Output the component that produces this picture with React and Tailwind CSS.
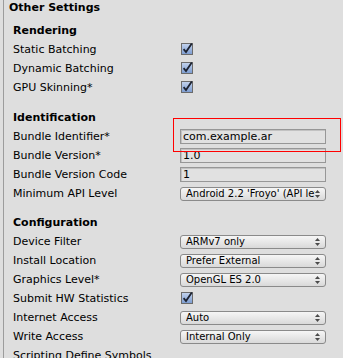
// Painel "Other Settings" do Player Settings (Android)

const headerClass = "h-[18px] leading-[18px] pl-[9px] text-[11px] font-bold text-black";

// Seta dupla dos menus suspensos
function UpDown() {
  return (
    <svg width="5" height="8" viewBox="0 0 5 8" className="shrink-0">
      <path d="M0 3 L2.5 0 L5 3 Z" fill="#4a4a4a" />
      <path d="M0 5 L2.5 8 L5 5 Z" fill="#4a4a4a" />
    </svg>
  );
}

function Checkbox() {
  return (
    <svg width="13" height="13" viewBox="0 0 13 13" className="overflow-visible ml-[1px]">
      <defs>
        <linearGradient id="cb" x1="0" y1="0" x2="0" y2="1">
          <stop offset="0" stopColor="#c4d4ee" />
          <stop offset="1" stopColor="#7b9bd0" />
        </linearGradient>
      </defs>
      <rect x="0.5" y="0.5" width="11" height="11" fill="url(#cb)" stroke="#6b6b6b" />
      <path d="M2.6 6.2 L5 9 L10.8 0.4" fill="none" stroke="#1c2230" strokeWidth="1.8" />
    </svg>
  );
}

function TextField({ value }) {
  return (
    <div className="h-[15px] border border-[#979797] bg-[#e1e1e1] pl-[2px] text-[11px] leading-[13px] text-black shadow-[inset_1px_1px_0_#c2c2c2] overflow-hidden whitespace-nowrap">
      {value}
    </div>
  );
}

function Dropdown({ value }) {
  return (
    <div className="flex h-[14px] items-center justify-between rounded-[3px] border border-[#8a8a8a] bg-linear-to-b from-[#f6f6f6] to-[#d9d9d9] pl-[5px] pr-[5px] text-[10px] leading-[12px] text-black">
      <span className="overflow-hidden whitespace-nowrap pr-[4px]">{value}</span>
      <UpDown />
    </div>
  );
}

function Row({ name, children }) {
  return (
    <div className="flex h-[19px] items-center">
      <div className="w-[176px] shrink-0 pl-[9px] text-[11px] leading-[19px] text-black whitespace-nowrap">{name}</div>
      <div className="w-[146px] shrink-0">{children}</div>
    </div>
  );
}

export default function App() {
  return (
    <div className="relative h-[358px] w-[343px] overflow-hidden bg-[#dedede] font-['DejaVu_Sans',sans-serif]">
      <div className="ml-[3px] h-full border-l border-[#9c9c9c]">
        <div className="h-[16px] pl-[5px] text-[11px] font-bold leading-[16px] text-black">Other Settings</div>

        {/* Rendering */}
        <div className="mt-[5px] h-[19px] leading-[19px] pl-[9px] text-[11px] font-bold text-black">Rendering</div>
        <Row name="Static Batching"><Checkbox /></Row>
        <Row name="Dynamic Batching"><Checkbox /></Row>
        <Row name="GPU Skinning*"><Checkbox /></Row>

        {/* Identification */}
        <div className={`mt-[12px] ${headerClass}`}>Identification</div>
        <Row name="Bundle Identifier*"><TextField value="com.example.ar" /></Row>
        <Row name="Bundle Version*"><TextField value="1.0" /></Row>
        <Row name="Bundle Version Code"><TextField value="1" /></Row>
        <Row name="Minimum API Level"><Dropdown value="Android 2.2 'Froyo' (API level 8)" /></Row>

        {/* Configuration */}
        <div className={`mt-[11px] ${headerClass}`}>Configuration</div>
        <Row name="Device Filter"><Dropdown value="ARMv7 only" /></Row>
        <Row name="Install Location"><Dropdown value="Prefer External" /></Row>
        <Row name="Graphics Level*"><Dropdown value="OpenGL ES 2.0" /></Row>
        <Row name="Submit HW Statistics"><Checkbox /></Row>
        <Row name="Internet Access"><Dropdown value="Auto" /></Row>
        <Row name="Write Access"><Dropdown value="Internal Only" /></Row>
        <Row name="Scripting Define Symbols" />
      </div>

      {/* Destaque vermelho sobre o Bundle Identifier */}
      <div className="absolute left-[173px] top-[118px] h-[34px] w-[168px] border border-[#ff0000]" />
    </div>
  );
}
